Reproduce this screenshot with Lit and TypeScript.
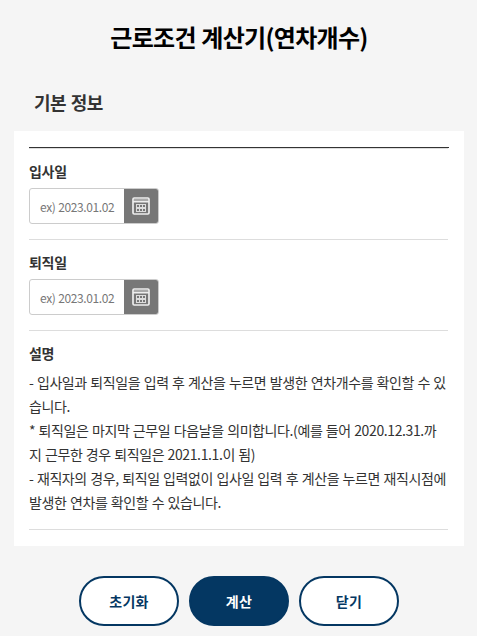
import { LitElement, html, css } from "lit";
import { customElement, property } from "lit/decorators.js";

@customElement("date-field")
class DateField extends LitElement {
  @property() label = "";
  static styles = css`
    :host { display: block; height: 91px; box-sizing: border-box; border-bottom: 1px solid #ddd; padding-top: 10px; margin-right: 1px; }
    .label { font-size: 14px; line-height: 24px; font-weight: 700; color: #333; letter-spacing: -0.3px; }
    .box { display: flex; width: 130px; height: 36px; margin-top: 5px; box-sizing: border-box; border: 1px solid #ccc; border-radius: 3px; overflow: hidden; background: #fff; }
    .value { flex: 1; padding-left: 10px; font-size: 12px; line-height: 36px; color: #777; letter-spacing: -0.4px; word-spacing: 0.6px; white-space: nowrap; }
    .btn { width: 34px; background: #777; display: flex; align-items: center; justify-content: center; }
    svg { display: block; }
  `;
  render() {
    return html`<div class="label">${this.label}</div>
      <div class="box"><div class="value">ex) 2023.01.02</div>
      <div class="btn"><svg width="18" height="18" viewBox="0 0 18 18"><rect x="1" y="1" width="16" height="16" rx="1.2" fill="none" stroke="#eee" stroke-width="1.7"/><path d="M2 3h14" stroke="#aaa" stroke-width="2"/><path d="M1 4.8h16" stroke="#eee" stroke-width="1.4"/><path d="M4 7h10v8H4z" fill="#ddd"/><path d="M5 8h2v2H5zM8 8h2v2H8zM11 8h2v2h-2zM5 12h2v2H5zM8 12h2v2H8zM11 12h2v2h-2z" fill="#777"/></svg></div></div>`;
  }
}

@customElement("app-root")
class AppRoot extends LitElement {
  static styles = css`
    :host { display: block; height: 636px; overflow: hidden; background: #f5f5f5; font-family: "Noto Sans CJK KR", sans-serif; color: #333; }
    h1 { margin: 0; padding: 19px 0 0 1px; text-align: center; font-size: 24px; line-height: 36px; font-weight: 700; color: #000; letter-spacing: -0.7px; word-spacing: 0.8px; }
    h2 { margin: 34px 0 0 34px; font-size: 18px; line-height: 26px; font-weight: 700; letter-spacing: -0.5px; word-spacing: 1px; }
    .card { margin: 16px 13px 0 14px; height: 415px; box-sizing: border-box; padding: 16px 15px 0; background: #fff; }
    .list { border-top: 1px solid #333; }
    .list::before { content: ""; display: block; height: 1px; background: #ddd; margin-right: 1px; }
    .desc { padding: 10px 0 15px; margin-right: 1px; border-bottom: 1px solid #ddd; font-size: 14px; line-height: 24px; }
    .label { font-weight: 700; letter-spacing: -0.3px; margin-bottom: 5px; }
    .line { white-space: nowrap; letter-spacing: -0.39px; word-spacing: 0.68px; }
    .buttons { display: flex; justify-content: center; gap: 10px; margin-top: 30px; }
    .b { width: 100px; height: 50px; box-sizing: border-box; border: 2px solid #043762; border-radius: 25px; background: #fff; color: #043762; font: 700 14px/46px "Noto Sans CJK KR", sans-serif; letter-spacing: 0.25px; text-align: center; padding: 0 0 0 1px; }
    .main { background: #043762; color: #fff; }
  `;
  render() {
    return html`<h1>근로조건 계산기(연차개수)</h1><h2>기본 정보</h2>
      <div class="card"><div class="list">
        <date-field label="입사일"></date-field><date-field label="퇴직일"></date-field>
        <div class="desc"><div class="label">설명</div>
          ${["- 입사일과 퇴직일을 입력 후 계산을 누르면 발생한 연차개수를 확인할 수 있", "습니다.", "* 퇴직일은 마지막 근무일 다음날을 의미합니다.(예를 들어 2020.12.31.까", "지 근무한 경우 퇴직일은 2021.1.1.이 됨)", "- 재직자의 경우, 퇴직일 입력없이 입사일 입력 후 계산을 누르면 재직시점에", "발생한 연차를 확인할 수 있습니다."].map(t => html`<div class="line">${t}</div>`)}
        </div></div></div>
      <div class="buttons"><button class="b">초기화</button><button class="b main">계산</button><button class="b">닫기</button></div>`;
  }
}
